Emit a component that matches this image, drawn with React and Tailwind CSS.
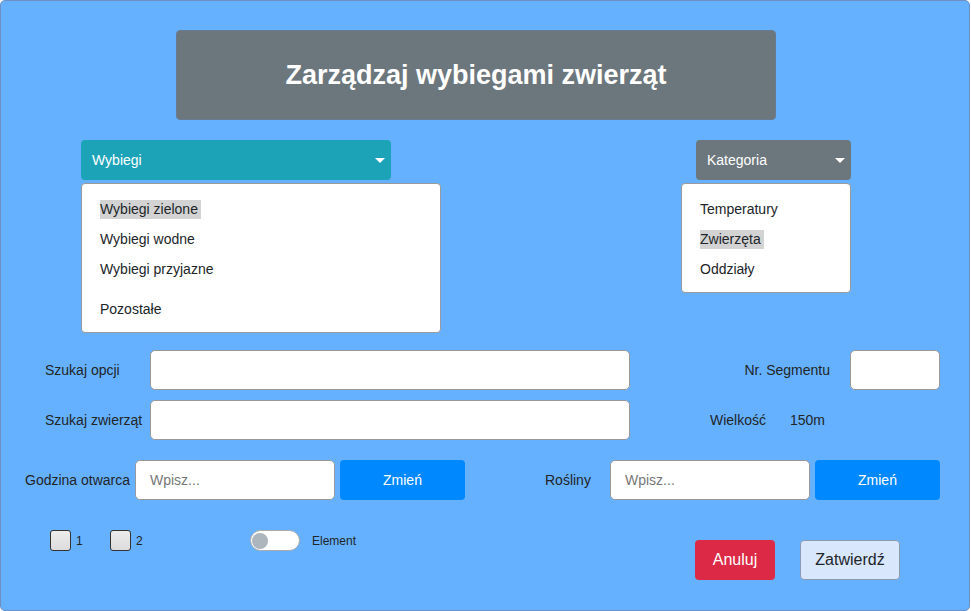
import React from "react";

const menuA = ["Wybiegi zielone", "Wybiegi wodne", "Wybiegi przyjazne"];
const menuB = ["Temperatury", "Zwierzęta", "Oddziały"];

function Caret() {
  return <span className="w-0 h-0 border-x-[5px] border-x-transparent border-t-[5px] border-t-white" />;
}

function MenuItem({ text, active, extraTop }) {
  return (
    <div className={`flex h-[19px] leading-[19px] ${extraTop ? "mt-[10px]" : ""}`}>
      <span className={`pr-[3px] ${active ? "bg-[#d3d3d3]" : ""}`}>{text}</span>
    </div>
  );
}

function Checkbox({ label, w }) {
  return (
    <div className={`flex items-center h-[21px] ${w}`}>
      <span className="w-[21px] h-[21px] rounded-[3px] border border-[#333] bg-gradient-to-b from-[#ececec] to-[#dcdcdc]" />
      <span className="ml-[5px] text-[12px]">{label}</span>
    </div>
  );
}

export default function App() {
  return (
    <div className="w-[971px] h-[611px] font-['Liberation_Sans',Arial,sans-serif] text-[#212529] text-[14px]">
      <div className="w-[970px] h-[611px] bg-[#66b1ff] border border-[#6e8fc6] rounded-[5px] flex flex-col">
        {/* titel */}
        <div className="mt-[29px] ml-[175px] w-[600px] h-[90px] bg-[#6c777d] rounded-[4px] border border-[#6a7a90] flex items-center justify-center">
          <h1 className="text-white font-bold text-[27px]">Zarządzaj wybiegami zwierząt</h1>
        </div>

        {/* dropdowny */}
        <div className="flex mt-[20px]">
          <div className="ml-[80px] w-[360px] flex flex-col">
            <button className="w-[310px] h-[40px] bg-[#1ca3b8] rounded-[4px] text-white flex items-center justify-between pl-[11px] pr-[6px]">
              <span>Wybiegi</span>
              <Caret />
            </button>
            <div className="mt-[3px] w-[360px] h-[150px] bg-white border border-[#9a9a9a] rounded-[4px] pt-[16px] pl-[18px] flex flex-col gap-[11px]">
              {menuA.map((t, i) => (
                <MenuItem key={t} text={t} active={i === 0} />
              ))}
              <MenuItem text="Pozostałe" extraTop />
            </div>
          </div>
          <div className="ml-[240px] w-[170px] flex flex-col items-end">
            <button className="w-[155px] h-[40px] bg-[#6c777d] rounded-[4px] text-white flex items-center justify-between pl-[11px] pr-[6px]">
              <span>Kategoria</span>
              <Caret />
            </button>
            <div className="mt-[3px] w-[170px] h-[110px] bg-white border border-[#9a9a9a] rounded-[4px] pt-[16px] pl-[18px] flex flex-col gap-[11px]">
              {menuB.map((t, i) => (
                <MenuItem key={t} text={t} active={i === 1} />
              ))}
            </div>
          </div>
        </div>

        {/* szukaj opcji */}
        <div className="flex items-center mt-[17px] h-[40px]">
          <div className="w-[149px] pl-[44px]">Szukaj opcji</div>
          <input className="w-[480px] h-[40px] bg-white border border-[#999] rounded-[5px] outline-none px-[14px]" />
          <div className="w-[220px] pr-[20px] text-right">Nr. Segmentu</div>
          <input className="w-[90px] h-[40px] bg-white border border-[#999] rounded-[5px] outline-none px-[10px]" />
        </div>

        {/* szukaj zwierzat */}
        <div className="flex items-center mt-[10px] h-[40px]">
          <div className="w-[149px] pl-[44px]">Szukaj zwierząt</div>
          <input className="w-[480px] h-[40px] bg-white border border-[#999] rounded-[5px] outline-none px-[14px]" />
          <span className="ml-[80px] w-[80px]">Wielkość</span>
          <span>150m</span>
        </div>

        {/* godzina i rosliny */}
        <div className="flex items-center mt-[20px] h-[40px]">
          <div className="w-[134px] pl-[24px]">Godzina otwarca</div>
          <input placeholder="Wpisz..." className="w-[200px] h-[40px] bg-white border border-[#999] rounded-[5px] outline-none px-[14px] placeholder:text-[#777]" />
          <button className="ml-[5px] w-[125px] h-[40px] bg-[#0088ff] rounded-[4px] text-white">Zmień</button>
          <span className="ml-[80px] w-[65px]">Rośliny</span>
          <input placeholder="Wpisz..." className="w-[200px] h-[40px] bg-white border border-[#999] rounded-[5px] outline-none px-[14px] placeholder:text-[#777]" />
          <button className="ml-[5px] w-[125px] h-[40px] bg-[#0088ff] rounded-[4px] text-white">Zmień</button>
        </div>

        {/* dol */}
        <div className="flex items-start mt-[30px] pl-[49px] pr-[69px]">
          <Checkbox label="1" w="w-[60px]" />
          <Checkbox label="2" w="w-[140px]" />
          <div className="flex items-center h-[21px]">
            <span className="w-[50px] h-[21px] rounded-full bg-white border border-[#aaa] flex items-center pl-[1px]">
              <span className="w-[16px] h-[16px] rounded-full bg-[#adb5bd]" />
            </span>
            <span className="ml-[12px] text-[12px]">Element</span>
          </div>
          <div className="ml-auto mt-[10px] flex gap-[25px]">
            <button className="w-[80px] h-[40px] bg-[#dc2945] rounded-[4px] text-white text-[16px]">Anuluj</button>
            <button className="w-[100px] h-[40px] bg-[#d8e7fb] border border-[#8a9bb5] rounded-[4px] text-[16px]">Zatwierdź</button>
          </div>
        </div>
      </div>
    </div>
  );
}
